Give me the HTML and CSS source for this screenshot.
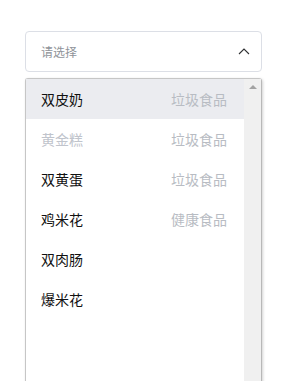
FILE: index.html
```html
<!DOCTYPE html>
<html lang="zh-CN">
<head>
    <meta charset="UTF-8">
    <meta name="viewport" content="width=device-width, initial-scale=1.0">
    <title>选择器</title>
    <link rel="stylesheet" href="styles.css">
</head>
<body>

<div class="select">
    <div class="select-input">
        <span class="placeholder">请选择</span>
        <svg class="arrow" width="12" height="7" viewBox="0 0 12 7">
            <polyline points="1,6 6,1 11,6" fill="none" stroke="#303133" stroke-width="1.1"/>
        </svg>
    </div>
    <div class="dropdown">
        <ul class="options">
            <li class="option hover"><span>双皮奶</span><span class="tag">垃圾食品</span></li>
            <li class="option disabled"><span>黄金糕</span><span class="tag">垃圾食品</span></li>
            <li class="option"><span>双黄蛋</span><span class="tag">垃圾食品</span></li>
            <li class="option"><span>鸡米花</span><span class="tag">健康食品</span></li>
            <li class="option"><span>双肉肠</span></li>
            <li class="option"><span>爆米花</span></li>
        </ul>
        <div class="scrollbar">
            <span class="scroll-up"></span>
        </div>
    </div>
</div>

</body>
</html>
```
FILE: styles.css
```css
body {
    margin: 0;
    padding: 31px 25px 0;
    font-family: "Noto Sans CJK SC", "Noto Sans", sans-serif;
    background-color: white;
    overflow: hidden;
}
.select {
    width: 237px;
}
.select-input {
    box-sizing: border-box;
    height: 41px;
    border: 1px solid #dcdfe6;
    border-radius: 4px;
    display: flex;
    align-items: center;
    justify-content: space-between;
    padding: 0 11px 0 15px;
}
.placeholder {
    font-size: 12px;
    color: #8f9399;
}
.arrow {
    display: block;
}
.dropdown {
    margin-top: 6px;
    height: 320px;
    border: 1px solid #c6c6c6;
    border-right-color: #b8b8b8;
    border-radius: 3px 3px 0 0;
    box-shadow: 1px 1px 3px rgba(0, 0, 0, 0.18);
    display: flex;
}
.options {
    list-style: none;
    margin: 0;
    padding: 0;
    flex: 1;
}
.option {
    height: 40px;
    display: flex;
    align-items: center;
    justify-content: space-between;
    padding: 0 17px 0 15px;
    font-size: 14px;
    color: #111;
}
.option.hover {
    background-color: #ebecf0;
}
.option.disabled {
    color: #c0c4cc;
}
.tag {
    color: #b8bcc3;
}
.scrollbar {
    width: 17px;
    background-color: #f0f0f0;
    display: flex;
    justify-content: center;
}
.scroll-up {
    margin-top: 6px;
    width: 0;
    height: 0;
    border-left: 4px solid transparent;
    border-right: 4px solid transparent;
    border-bottom: 4px solid #a3a3a3;
}
```
